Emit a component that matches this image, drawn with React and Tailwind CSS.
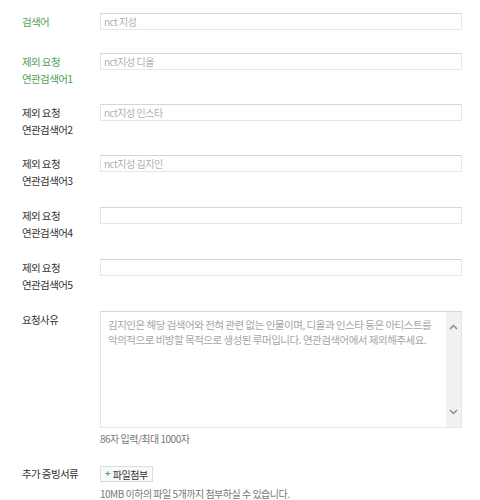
import React from 'react';

const font = { fontFamily: '"Noto Sans CJK KR", "Noto Sans", sans-serif' };

const rows = [
  { label: ['검색어'], green: true, value: 'nct 지성', h: 'h-[40px]' },
  { label: ['제외 요청', '연관검색어1'], green: true, value: 'nct지성 디올', h: 'h-[51px]' },
  { label: ['제외 요청', '연관검색어2'], value: 'nct지성 인스타', h: 'h-[51px]' },
  { label: ['제외 요청', '연관검색어3'], value: 'nct지성 김지인', h: 'h-[52px]' },
  { label: ['제외 요청', '연관검색어4'], value: '', h: 'h-[52px]' },
  { label: ['제외 요청', '연관검색어5'], value: '', h: 'h-[52px]' },
];

function Label({ lines, green }) {
  return (
    <div
      className={`w-[78px] shrink-0 text-[10.5px] leading-[17px] tracking-[-0.6px] ${
        green ? 'text-[#4f9f52]' : 'text-[#333]'
      }`}
    >
      {lines.map((l) => (
        <div key={l}>{l}</div>
      ))}
    </div>
  );
}

function Field({ value }) {
  return (
    <div className="w-[362px] h-[17px] border border-[#e6e6e6] border-t-[#d6d6d6] bg-white flex items-center pl-[3px] text-[10px] tracking-[-0.5px] text-[#b0b0b0]">
      {value}
    </div>
  );
}

export default function App() {
  return (
    <div className="w-[480px] h-[500px] bg-white pl-[22px] pt-[13px] overflow-hidden" style={font}>
      {rows.map((r, i) => (
        <div key={i} className={`flex items-start ${r.h}`}>
          <Label lines={r.label} green={r.green} />
          <Field value={r.value} />
        </div>
      ))}

      {/* 요청사유 */}
      <div className="flex items-start">
        <Label lines={['요청사유']} />
        <div className="flex flex-col">
          <div className="w-[362px] h-[117px] border border-[#e6e6e6] border-t-[#d6d6d6] flex">
            <div className="flex-1 pl-[7px] pt-[5px] text-[10.5px] leading-[15px] tracking-[-0.5px] text-[#a5a5a5]">
              김지인은 해당 검색어와 전혀 관련 없는 인물이며, 디올과 인스타 등은 아티스트를
              <br />
              악의적으로 비방할 목적으로 생성된 루머입니다. 연관검색어에서 제외해주세요.
            </div>
            <div className="w-[15px] bg-[#f1f1f1] flex flex-col justify-between items-center py-[12px]">
              <svg width="9" height="6" viewBox="0 0 9 6">
                <path d="M1 5 L4.5 1.5 L8 5" fill="none" stroke="#8a8a8a" strokeWidth="1.5" />
              </svg>
              <svg width="9" height="6" viewBox="0 0 9 6">
                <path d="M1 1 L4.5 4.5 L8 1" fill="none" stroke="#8a8a8a" strokeWidth="1.5" />
              </svg>
            </div>
          </div>
          <div className="mt-[4px] text-[10px] leading-[14px] tracking-[-0.5px] text-[#777]">
            86자 입력/최대 1000자
          </div>
        </div>
      </div>

      {/* 추가 증빙서류 */}
      <div className="flex items-start mt-[20px]">
        <div className="w-[78px] shrink-0 text-[10.5px] leading-[16px] tracking-[-0.6px] text-[#333]">
          추가 증빙서류
        </div>
        <div className="flex flex-col items-start">
          <button className="h-[16px] px-[4px] border border-[#dcdcdc] bg-[#f9f9f9] flex items-center gap-[3px] text-[10px] tracking-[-0.5px] text-[#333]">
            <span className="text-[#4f9f52] font-bold text-[9px]">+</span>
            <span>파일첨부</span>
          </button>
          <div className="mt-[5px] text-[10px] leading-[14px] tracking-[-0.5px] text-[#777]">
            10MB 이하의 파일 5개까지 첨부하실 수 있습니다.
          </div>
        </div>
      </div>
    </div>
  );
}
